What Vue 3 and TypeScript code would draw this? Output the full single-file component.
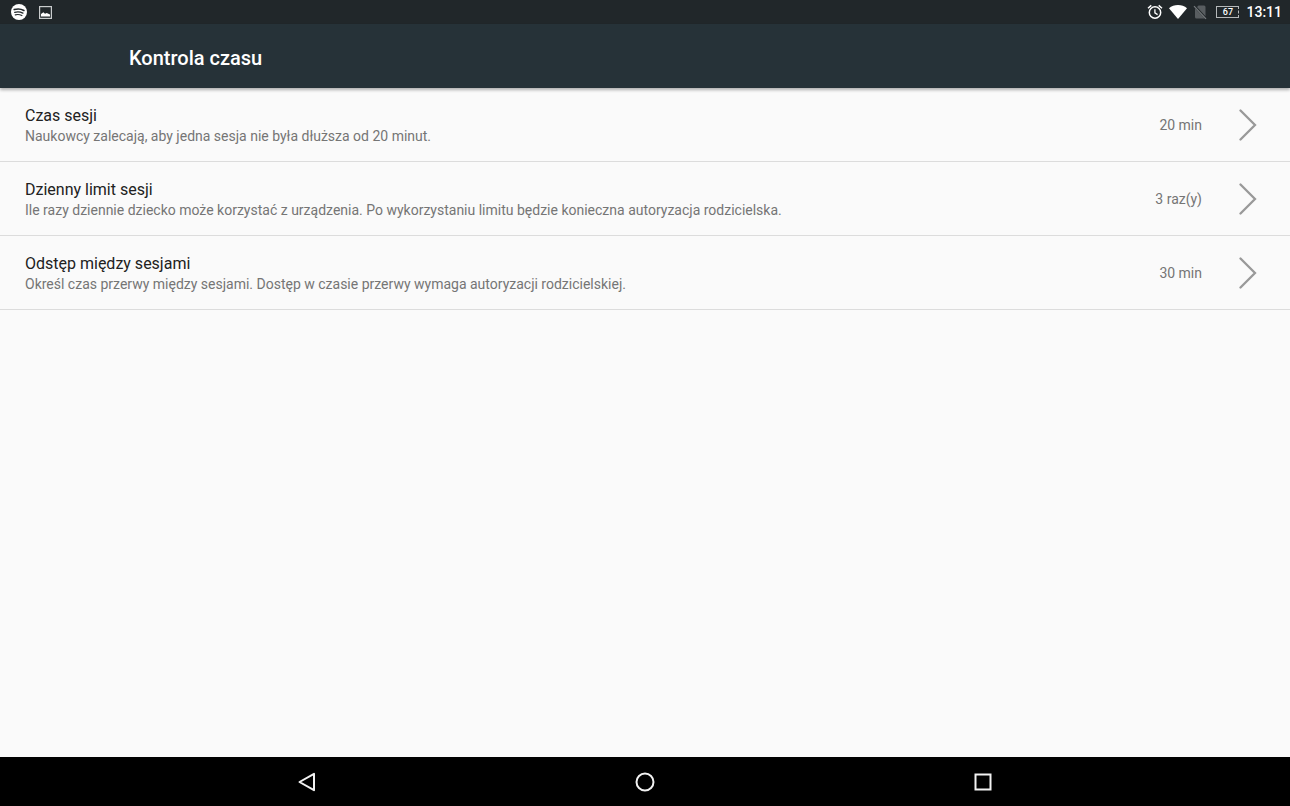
<script setup lang="ts">
interface TimeSetting {
  id: string
  title: string
  summary: string
  value: string
}

const settings: TimeSetting[] = [
  {
    id: 'session-length',
    title: 'Czas sesji',
    summary: 'Naukowcy zalecają, aby jedna sesja nie była dłuższa od 20 minut.',
    value: '20 min',
  },
  {
    id: 'daily-limit',
    title: 'Dzienny limit sesji',
    summary:
      'Ile razy dziennie dziecko może korzystać z urządzenia. Po wykorzystaniu limitu będzie konieczna autoryzacja rodzicielska.',
    value: '3 raz(y)',
  },
  {
    id: 'session-gap',
    title: 'Odstęp między sesjami',
    summary:
      'Określ czas przerwy między sesjami. Dostęp w czasie przerwy wymaga autoryzacji rodzicielskiej.',
    value: '30 min',
  },
]
</script>

<template>
  <div class="screen">
    <div class="status-bar">
      <div class="status-group notifications">
        <svg width="16" height="16" viewBox="0 0 16 16" aria-hidden="true">
          <circle cx="8" cy="8" r="8" fill="#fff" />
          <g fill="none" stroke="#22282b" stroke-linecap="round">
            <path d="M3.2 5.600c3.400-1 6.900-.7 9.700.9" stroke-width="1.600" />
            <path d="M3.700 8.300c2.900-.8 5.700-.5 8.200.8" stroke-width="1.300" />
            <path d="M4.200 10.900c2.400-.6 4.600-.4 6.700.7" stroke-width="1.100" />
          </g>
        </svg>
        <svg width="13" height="13" viewBox="0 0 13 13" aria-hidden="true">
          <rect x=".6" y=".6" width="11.800" height="11.800" fill="none" stroke="#c9cccd" stroke-width="1.200" />
          <path d="M2 10.500V8l2.400-1.700L6 7.800l1.800-.9L11 8.600v1.900z" fill="#fff" />
        </svg>
      </div>
      <div class="status-group indicators">
        <svg width="16" height="16" viewBox="0 0 16 16" aria-hidden="true">
          <g fill="none" stroke="#fff" stroke-width="1.500">
            <circle cx="8" cy="8.500" r="5.700" />
            <path d="M1 4.200 4.300 1.400M11.700 1.400 15 4.200" />
            <path d="M7.900 5.200v3.700l2.700 1.700" stroke-width="1.300" />
          </g>
        </svg>
        <svg width="18" height="14" viewBox="0 0 18 14" aria-hidden="true">
          <path d="M9 14 0 3.200C2.500 1.100 5.600 0 9 0s6.500 1.100 9 3.200z" fill="#fff" />
        </svg>
        <svg width="14" height="16" viewBox="0 0 14 16" aria-hidden="true">
          <path d="M5.500 1.500H11q1.500 0 1.500 1.500v9.200L4 3zM2 4.600l9.800 10H3.500Q2 14.600 2 13z" fill="#585d60" />
          <path d="m1 2.200 12 12.600" stroke="#777b7e" stroke-width="1.200" />
        </svg>
        <span class="battery">67</span>
        <time class="clock">13:11</time>
      </div>
    </div>

    <header class="app-bar">
      <h1>Kontrola czasu</h1>
    </header>

    <main class="settings">
      <button v-for="item in settings" :key="item.id" type="button" class="row">
        <span class="text">
          <span class="title">{{ item.title }}</span>
          <span class="summary">{{ item.summary }}</span>
        </span>
        <span class="value">{{ item.value }}</span>
        <svg class="chevron" width="18" height="32" viewBox="0 0 18 32" aria-hidden="true">
          <path d="M1.500 1.500 16 16 1.500 30.500" fill="none" stroke="#999" stroke-width="2.300" stroke-linecap="round" />
        </svg>
      </button>
    </main>

    <nav class="nav-bar">
      <button type="button" aria-label="Wstecz">
        <svg width="20" height="20" viewBox="0 0 20 20" aria-hidden="true">
          <path d="M2.500 10 17 1.800v16.400z" fill="none" stroke="#f2f2f2" stroke-width="2" stroke-linejoin="round" />
        </svg>
      </button>
      <button type="button" aria-label="Ekran główny">
        <svg width="20" height="20" viewBox="0 0 20 20" aria-hidden="true">
          <circle cx="10" cy="10" r="8.500" fill="none" stroke="#f2f2f2" stroke-width="2" />
        </svg>
      </button>
      <button type="button" aria-label="Ostatnie aplikacje">
        <svg width="20" height="20" viewBox="0 0 20 20" aria-hidden="true">
          <rect x="2.500" y="2.500" width="15" height="15" fill="none" stroke="#f2f2f2" stroke-width="2" />
        </svg>
      </button>
    </nav>
  </div>
</template>

<style>
body {
  margin: 0;
}
</style>

<style scoped>
.screen {
  display: flex;
  flex-direction: column;
  min-height: 100vh;
  background: #fafafa;
  font-family: Roboto, 'Noto Sans', sans-serif;
}

.status-bar {
  display: flex;
  align-items: center;
  justify-content: space-between;
  height: 24px;
  padding: 0 8px 0 11px;
  background: #21272a;
  color: #fff;
}

.status-group {
  display: flex;
  align-items: center;
}

.notifications {
  gap: 12px;
}

.indicators {
  gap: 6px;
}

.battery {
  box-sizing: border-box;
  width: 23px;
  height: 12px;
  margin: 0 1px 0 3px;
  border: 1px solid #b5b8ba;
  border-right-style: dashed;
  font-size: 9px;
  font-weight: 500;
  line-height: 10px;
  text-align: center;
}

.clock {
  font-size: 14px;
  font-weight: 500;
  line-height: 24px;
}

.app-bar {
  position: relative;
  display: flex;
  align-items: center;
  height: 64px;
  padding: 0 129px;
  background: #263238;
  box-shadow: 0 2px 3px rgba(0, 0, 0, 0.3);
}

.app-bar h1 {
  margin: 0;
  padding-top: 3px;
  color: #fff;
  font-size: 20px;
  font-weight: 500;
  line-height: 24px;
}

.settings {
  flex: 1;
}

.row {
  display: flex;
  align-items: center;
  box-sizing: border-box;
  width: 100%;
  min-height: 74px;
  padding: 0 33px 0 25px;
  border: 0;
  border-bottom: 1px solid #dcdcdc;
  background: transparent;
  font-family: inherit;
  text-align: left;
}

.text {
  display: flex;
  flex: 1;
  flex-direction: column;
  padding-top: 3px;
}

.title {
  color: #212121;
  font-size: 16px;
  line-height: 20px;
}

.summary {
  color: #757575;
  font-size: 14px;
  line-height: 20px;
}

.value {
  margin: 0 37px 0 24px;
  color: #757575;
  font-size: 14px;
  line-height: 20px;
}

.nav-bar {
  display: grid;
  grid-template-columns: repeat(3, 1fr);
  height: 49px;
  padding: 0 138px;
  background: #000;
}

.nav-bar button {
  display: flex;
  align-items: center;
  justify-content: center;
  padding: 0;
  border: 0;
  background: transparent;
}
</style>
